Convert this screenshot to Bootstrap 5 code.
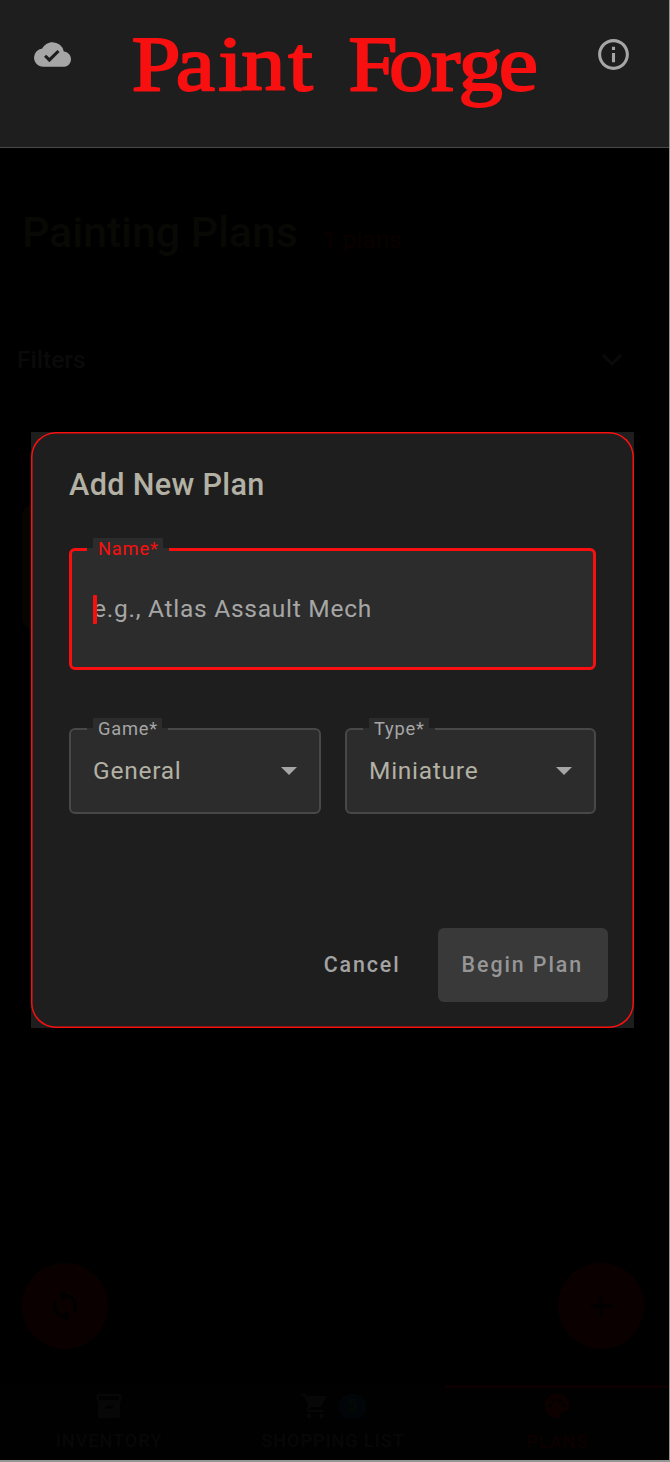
<!DOCTYPE html>
<html lang="en">
<head>
<meta charset="utf-8">
<meta name="viewport" content="width=device-width, initial-scale=1">
<title>Paint Forge</title>
<link href="https://cdn.jsdelivr.net/npm/bootstrap@5.3.0/dist/css/bootstrap.min.css" rel="stylesheet">
<style>
  body { background: #969696; font-family: Roboto, "Liberation Sans", sans-serif; overflow: hidden; line-height: 1.2; }
  .app-shell { width: 669px; height: 1460px; background: #000; position: relative; overflow: hidden; }
  .app-bar { height: 148px; background: #1e1e1e; border-bottom: 1px solid #484848; padding: 0 37px 0 34px; }
  .app-bar svg { flex: none; }
  .bar-icon { margin-top: 36px; }
  .brand { font: 400 79px "Liberation Serif", serif; fill: #f81010; stroke: #f81010; stroke-width: 2; stroke-linejoin: round; }
  .page-head { height: 158px; padding: 0 22px; color: #080804; }
  .page-head h1 { font-size: 43px; letter-spacing: -.1px; margin: 0; font-weight: 500; line-height: 52px; padding-top: 58px; }
  .plan-count { font-size: 24.5px; color: #0b0000; padding-top: 77px; margin-left: 25px; line-height: 30px; }
  .filters { height: 108px; padding: 0 46px 0 17px; color: #0a0a0a; font-size: 24.5px; font-weight: 500; }
  .plan-tile { width: 200px; height: 126px; margin: 90px 0 0 22px; border-radius: 12px; background: #080400; }
  .fab-row { padding: 0 25px 0 22px; margin-bottom: 36px; }
  .fab { width: 86px; height: 86px; background: #0b0000; color: #000; }
  .bottom-tabs { height: 75px; margin-left: -3px; font-size: 18.3px; font-weight: 500; letter-spacing: .85px; color: #070707; background: #010101; }
  .tab-on { color: #0d0000; border-top: 3px solid #0d0000 !important; }
  .tab-item { border-top: 3px solid transparent; padding-top: 3px; }
  .tab-item .glyph { height: 30px; }
  .tab-item span { line-height: 22px; margin-top: 9px; }
  .tab-on span { margin-top: 10px; }
  .count-pill { width: 29px; height: 25px; border-radius: 13px; background: #010507; color: #060a04; font-size: 16px; letter-spacing: 0; }
  .plan-dialog { position: absolute; left: 31px; top: 432px; width: 603px; height: 596px; background: #1e1e1e; }
  .dialog-frame { box-shadow: inset 0 0 0 1.5px #f81010; border-radius: 25px; padding: 35px 38px 0; }
  .plan-dialog h2 { font-size: 30.6px; letter-spacing: .34px; line-height: 36px; font-weight: 500; color: #b3b1a4; margin: 0 0 45px; }
  .outline-field { background: #2c2c2c; border: 2px solid #484848; border-radius: 6px; position: relative; font-size: 24.5px; letter-spacing: .74px; color: #b3b1a4; padding: 0 22px; }
  .outline-field .float-tag { position: absolute; top: -12px; left: 22px; height: 20px; line-height: 22px; padding: 0 4px 0 5px; font-size: 18.3px; letter-spacing: .8px; background: #2c2c2c; color: #a6a6a6; }
  .float-tag::before, .float-tag::after { content: ""; position: absolute; top: 10px; width: 6px; height: 3px; background: #2c2c2c; }
  .float-tag::before { left: -6px; } .float-tag::after { right: -6px; }
  .outline-field.focused { border: 3px solid #f81010; height: 122px; color: #a6a6a6; padding-left: 21px; }
  .focused .float-tag { color: #f81010; left: 21px; top: -13px; }
  .cursor-bar { width: 3.5px; height: 29px; background: #f81010; margin-right: -3.5px; border-radius: 1px; z-index: 1; }
  .select-field { height: 86px; width: 252px; }
  .select-field.narrow { width: 251px; }
  .arrow-down { border: 8px solid transparent; border-top-color: #a6a6a6; border-bottom: 0; }
  .dialog-actions { margin-top: 114px; margin-right: -12px; gap: 13px; }
  .dialog-actions .btn { font-size: 21.4px; letter-spacing: 1.91px; font-weight: 500; height: 74px; border: 0; padding: 0 24px; border-radius: 6px; color: #a3a3a3; }
  .dialog-actions .btn-plan { background: #393939; color: #969696; padding-right: 25px; }
</style>
</head>
<body>
<div class="app-shell d-flex flex-column">
  <header class="app-bar d-flex justify-content-between align-items-start">
    <svg class="bar-icon" width="37" height="37" viewBox="0 0 24 24" fill="#a6a6a6"><path d="M19.35 10.04A7.49 7.49 0 0 0 12 4C9.11 4 6.6 5.64 5.35 8.04A5.994 5.994 0 0 0 0 14c0 3.31 2.69 6 6 6h13c2.76 0 5-2.24 5-5 0-2.64-2.05-4.78-4.65-4.96zM10 17l-3.5-3.5 1.41-1.41L10 14.17 15.18 9l1.41 1.41L10 17z"/></svg>
    <svg width="420" height="140" viewBox="0 0 420 140" class="brand" role="img">
      <g transform="translate(8.5 90) scale(1.12 1)">
        <text x="0 39.5 77.5 98 140">Paint</text>
        <text x="193.5 230 267.5 292 328">Forge</text>
      </g>
    </svg>
    <svg class="bar-icon" width="37" height="37" viewBox="0 0 24 24" fill="#a6a6a6"><path d="M11 7h2v2h-2zm0 4h2v6h-2zm1-9C6.48 2 2 6.48 2 12s4.48 10 10 10 10-4.48 10-10S17.52 2 12 2zm0 18c-4.41 0-8-3.59-8-8s3.59-8 8-8 8 3.59 8 8-3.59 8-8 8z"/></svg>
  </header>
  <main class="flex-grow-1 d-flex flex-column">
    <div class="page-head d-flex">
      <h1>Painting Plans</h1><span class="plan-count">1 plans</span>
    </div>
    <div class="filters d-flex align-items-center justify-content-between">
      <span>Filters</span>
      <svg width="22" height="14" viewBox="0 0 22 14" fill="none" stroke="#0a0a0a" stroke-width="3"><path d="M2 2l9 9 9-9"/></svg>
    </div>
    <div class="plan-tile"></div>
    <div class="fab-row d-flex justify-content-between mt-auto">
      <div class="fab rounded-circle d-flex align-items-center justify-content-center">
        <svg width="36" height="36" viewBox="0 0 24 24" fill="#000"><path d="M12 4V1L8 5l4 4V6c3.31 0 6 2.69 6 6 0 1.01-.25 1.97-.7 2.8l1.46 1.46A7.93 7.93 0 0 0 20 12c0-4.42-3.58-8-8-8zm0 14c-3.31 0-6-2.69-6-6 0-1.01.25-1.97.7-2.8L5.24 7.74A7.93 7.93 0 0 0 4 12c0 4.42 3.58 8 8 8v3l4-4-4-4v3z"/></svg>
      </div>
      <div class="fab rounded-circle d-flex align-items-center justify-content-center">
        <svg width="36" height="36" viewBox="0 0 24 24" fill="#000"><path d="M19 13h-6v6h-2v-6H5v-2h6V5h2v6h6v2z"/></svg>
      </div>
    </div>
  </main>
  <nav class="bottom-tabs row g-0 text-center">
    <div class="col tab-item d-flex flex-column align-items-center">
      <div class="glyph d-flex align-items-center"><svg width="30" height="30" viewBox="0 0 24 24" fill="currentColor"><path d="M20 2H4c-1 0-2 .9-2 2v3.01c0 .72.43 1.34 1 1.69V20c0 1.1 1.1 2 2 2h14c.9 0 2-.9 2-2V8.7c.57-.35 1-.97 1-1.69V4c0-1.1-1-2-2-2zm-5 12H9v-2h6v2zm5-7H4V4h16v3z"/></svg></div>
      <span>INVENTORY</span>
    </div>
    <div class="col tab-item d-flex flex-column align-items-center">
      <div class="glyph d-flex align-items-center gap-2"><svg width="30" height="30" viewBox="0 0 24 24" fill="currentColor"><path d="M7 18c-1.1 0-1.99.9-1.99 2S5.9 22 7 22s2-.9 2-2-.9-2-2-2zM1 2v2h2l3.6 7.59-1.35 2.45C4.52 15.37 5.48 17 7 17h12v-2H7l1.1-2h7.45c.75 0 1.41-.41 1.75-1.03L21.7 4H5.21l-.94-2H1zm16 16c-1.1 0-1.99.9-1.99 2s.89 2 1.99 2 2-.9 2-2-.9-2-2-2z"/></svg><div class="count-pill d-flex align-items-center justify-content-center">5</div></div>
      <span>SHOPPING LIST</span>
    </div>
    <div class="col tab-item tab-on d-flex flex-column align-items-center">
      <div class="glyph d-flex align-items-center"><svg width="30" height="30" viewBox="0 0 24 24" fill="currentColor"><path d="M12 2C6.49 2 2 6.49 2 12s4.49 10 10 10a2.5 2.5 0 0 0 2.5-2.5c0-.61-.23-1.2-.64-1.67a.5.5 0 0 1 .37-.83H16c3.31 0 6-2.69 6-6 0-4.96-4.49-9-10-9zM6.5 13a1.5 1.5 0 1 1 0-3 1.5 1.5 0 0 1 0 3zm3-4a1.5 1.5 0 1 1 0-3 1.5 1.5 0 0 1 0 3zm5 0a1.5 1.5 0 1 1 0-3 1.5 1.5 0 0 1 0 3zm3 4a1.5 1.5 0 1 1 0-3 1.5 1.5 0 0 1 0 3z"/></svg></div>
      <span>PLANS</span>
    </div>
  </nav>

  <section class="plan-dialog" role="dialog">
    <div class="dialog-frame w-100 h-100">
      <h2>Add New Plan</h2>
      <div class="outline-field focused d-flex align-items-center">
        <span class="float-tag">Name*</span><span class="cursor-bar"></span><span>e.g., Atlas Assault Mech</span>
      </div>
      <div class="d-flex justify-content-between" style="margin-top: 58px">
        <div class="outline-field select-field d-flex align-items-center justify-content-between">
          <span class="float-tag">Game*</span><span>General</span><i class="arrow-down"></i>
        </div>
        <div class="outline-field select-field narrow d-flex align-items-center justify-content-between">
          <span class="float-tag">Type*</span><span>Miniature</span><i class="arrow-down"></i>
        </div>
      </div>
      <div class="dialog-actions d-flex justify-content-end">
        <button class="btn" type="button">Cancel</button>
        <button class="btn btn-plan" type="button">Begin Plan</button>
      </div>
    </div>
  </section>
</div>
<script src="https://cdn.jsdelivr.net/npm/bootstrap@5.3.0/dist/js/bootstrap.bundle.min.js"></script>
</body>
</html>
